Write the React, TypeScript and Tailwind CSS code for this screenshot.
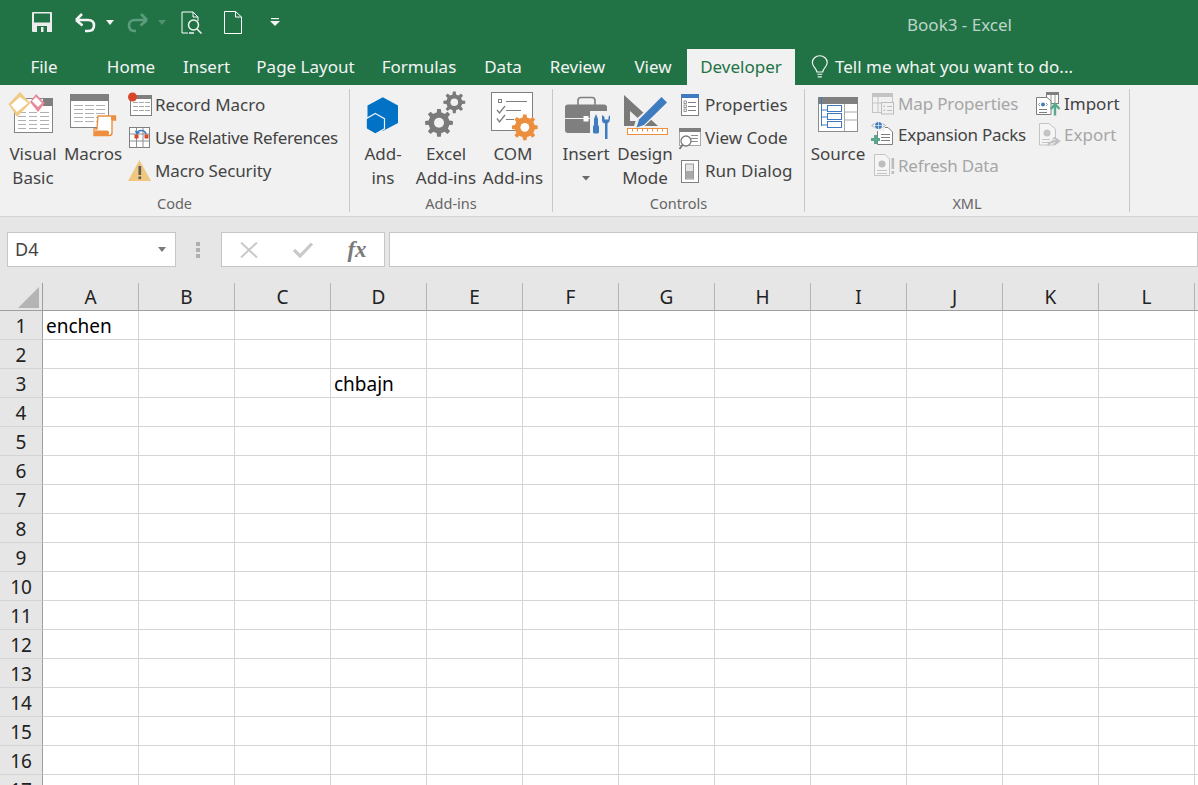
import type { ReactNode } from "react";

const columns = ["A", "B", "C", "D", "E", "F", "G", "H", "I", "J", "K", "L", ""];
const rowNumbers = Array.from({ length: 17 }, (_, i) => i + 1);
const cellText: Record<string, string> = { A1: "enchen", D3: "chbajn" };

const tabs = [
  { name: "File", width: "w-[92px] pr-1" },
  { name: "Home", width: "w-[78px]" },
  { name: "Insert", width: "w-[73px]" },
  { name: "Page Layout", width: "w-[125px]" },
  { name: "Formulas", width: "w-[102px]" },
  { name: "Data", width: "w-[66px]" },
  { name: "Review", width: "w-[83px]" },
  { name: "View", width: "w-[68px]" },
];

// gear outline as polygon points, used by the add-in icons
function gear(cx: number, cy: number, outer: number, inner: number, teeth: number) {
  const pts: string[] = [];
  const step = (Math.PI * 2) / teeth;
  for (let i = 0; i < teeth; i++) {
    const a = i * step - Math.PI / 2;
    const corners: [number, number][] = [
      [inner, a - step * 0.5],
      [inner, a - step * 0.28],
      [outer, a - step * 0.17],
      [outer, a + step * 0.17],
      [inner, a + step * 0.28],
    ];
    corners.forEach(([r, t]) => {
      pts.push(`${(cx + r * Math.cos(t)).toFixed(2)},${(cy + r * Math.sin(t)).toFixed(2)}`);
    });
  }
  return pts.join(" ");
}

function Icon({ box, children }: { box: [number, number, number, number]; children: ReactNode }) {
  return (
    <svg viewBox={box.join(" ")} width={box[2]} height={box[3]} className="block shrink-0">
      {children}
    </svg>
  );
}

function HLines({ x, w, ys, color = "#a8a8a8" }: { x: number; w: number; ys: number[]; color?: string }) {
  return (
    <>
      {ys.map((y) => (
        <rect key={y} x={x} y={y} width={w} height={1} fill={color} />
      ))}
    </>
  );
}

const VisualBasicIcon = () => (
  <Icon box={[8, 89, 50, 52]}>
    <rect x="14.5" y="98.5" width="38" height="34" fill="#fff" stroke="#848484" />
    <rect x="43" y="98" width="10" height="8" fill="#7f7f7f" />
    {[112, 116, 120, 124, 128].map((y) => (
      <g key={y} fill="#b0b0b0">
        <rect x="18" y={y} width="8" height="1" />
        <rect x="29" y={y} width="8" height="1" />
        <rect x="40" y={y} width="9" height="1" />
      </g>
    ))}
    <path d="M20 92 L30.5 103 L17 117 L8.5 104 Z" fill="#f0cb85" />
    <path d="M20 97 L28 103 L17 112 L11 105 Z" fill="#fff" />
    <path d="M36 94 L44.7 103 L38 112 L30 102 Z" fill="#e98a9b" />
    <path d="M36 97 L42 103 L38 107 L32 101 Z" fill="#fff" />
  </Icon>
);

const MacrosIcon = () => (
  <Icon box={[68, 89, 50, 52]}>
    <rect x="70.5" y="94.5" width="38" height="33" fill="#fff" stroke="#848484" />
    <rect x="70" y="94" width="39" height="7" fill="#7f7f7f" />
    {[105, 109, 113, 117, 121].map((y) => (
      <g key={y} fill="#b0b0b0">
        <rect x="74" y={y} width="9" height="1" />
        <rect x="85" y={y} width="9" height="1" />
        <rect x="96" y={y} width="9" height="1" />
      </g>
    ))}
    <path d="M98 116 H115.5 V120 H112 V133 Q112 135.5 109 135.5 H94 L94 129 H97 Z" fill="#fff" stroke="#ed8f3f" strokeWidth="1.4" />
    <rect x="94" y="130.5" width="15" height="5" rx="2" fill="#ed8f3f" />
    <rect x="111" y="116" width="5" height="4" fill="#ed8f3f" />
  </Icon>
);

const RecordIcon = () => (
  <Icon box={[127, 89, 27, 33]}>
    <rect x="130.5" y="95.5" width="21" height="20" fill="#fff" stroke="#7f7f7f" />
    <rect x="130" y="95" width="22" height="4" fill="#7f7f7f" />
    {[102, 106, 110].map((y) => (
      <g key={y} fill="#a8a8a8">
        <rect x="133" y={y} width="5" height="1" />
        <rect x="139" y={y} width="5" height="1" />
        <rect x="145" y={y} width="5" height="1" />
      </g>
    ))}
    <circle cx="132.5" cy="97" r="4.5" fill="#d9472b" />
  </Icon>
);

const RelativeIcon = () => (
  <Icon box={[127, 122, 27, 33]}>
    <rect x="129.5" y="127.5" width="20" height="20" fill="#fff" stroke="#7f7f7f" />
    <path d="M136.5 127.5 V147.5 M143 127.5 V147.5 M129.5 134 H149.5 M129.5 141 H149.5" stroke="#8f8f8f" fill="none" />
    <rect x="134.5" y="134.5" width="4" height="4" fill="#d9472b" />
    <rect x="144.5" y="134.5" width="4" height="4" fill="#d9472b" />
    <path d="M146 134 Q145 130.5 141 130.5 Q138 130.5 137 133" stroke="#3f7cbf" strokeWidth="1.6" fill="none" />
    <path d="M134.5 130.5 L137 135 L140 132 Z" fill="#3f7cbf" />
  </Icon>
);

const SecurityIcon = () => (
  <Icon box={[127, 155, 27, 33]}>
    <path d="M139.5 160 L151 181 H128 Z" fill="#f0c77f" />
    <rect x="138.5" y="166" width="2.6" height="9" fill="#5a5a5a" />
    <rect x="138.5" y="176.5" width="2.6" height="2.6" fill="#5a5a5a" />
  </Icon>
);

const AddInsIcon = () => (
  <Icon box={[364, 89, 38, 52]}>
    <path d="M382.8 97.2 L398 105.5 V123 L382.8 131 L367.5 123 V105.5 Z" fill="#0272c6" />
    <path d="M375.3 113.5 L384.5 118.7 V128.8 L375.3 134 L366.2 128.8 V118.7 Z" fill="#0272c6" stroke="#f1f1f1" strokeWidth="1.2" />
  </Icon>
);

const ExcelAddInsIcon = () => (
  <Icon box={[424, 89, 44, 52]}>
    <polygon points={gear(439, 122.8, 14, 10.5, 8)} fill="#7a7a7a" />
    <circle cx="439" cy="122.8" r="5" fill="#f1f1f1" />
    <polygon points={gear(454.3, 102.3, 11, 8, 8)} fill="#7a7a7a" />
    <circle cx="454.3" cy="102.3" r="3.8" fill="#f1f1f1" />
  </Icon>
);

const ComIcon = () => (
  <Icon box={[488, 89, 50, 52]}>
    <rect x="491.5" y="92.5" width="41" height="38" fill="#fff" stroke="#7f7f7f" />
    <rect x="498.5" y="99.5" width="3" height="3" fill="#fff" stroke="#7f7f7f" />
    <rect x="506" y="101" width="21" height="1" fill="#7f7f7f" />
    <rect x="506" y="110" width="15" height="1" fill="#7f7f7f" />
    <rect x="506" y="119" width="8" height="1" fill="#7f7f7f" />
    <path d="M497 110 L499.5 113 L505 106 M497 118.5 L499.5 122 L505 115" stroke="#7f7f7f" strokeWidth="1.3" fill="none" />
    <polygon points={gear(524.8, 127.3, 13, 10, 8)} fill="#eb8f3f" />
    <circle cx="524.8" cy="127.3" r="4.4" fill="#fff" />
  </Icon>
);

const InsertIcon = () => (
  <Icon box={[562, 89, 48, 52]}>
    <path d="M578 105 V100.5 Q578 97.5 581 97.5 H592 Q595 97.5 595 100.5 V105" fill="none" stroke="#7f7f7f" strokeWidth="1.6" />
    <rect x="565" y="104.5" width="42" height="28.5" rx="3" fill="#7f7f7f" />
    <rect x="565" y="118" width="42" height="1" fill="#f1f1f1" />
    <rect x="583.5" y="116" width="5" height="5.5" fill="#fff" />
    <path d="M590 111 H612 V139 H590 Z" fill="#f1f1f1" />
    <path d="M596 114 L598 119 V125 H594 V119 Z" fill="#3f7cbf" />
    <rect x="593" y="125" width="6" height="8.5" rx="1.5" fill="#3f7cbf" />
    <path d="M602 115 V120 Q602 123 605 123.5 V139 H607.5 V123.5 Q610 122 610 118 V115 L608.5 117 V119.5 H604.5 V117 Z" fill="#3f7cbf" />
  </Icon>
);

const DesignIcon = () => (
  <Icon box={[622, 89, 46, 52]}>
    <path fillRule="evenodd" d="M624 95 L658 126 H624 Z M630 111 V121 H641 Z" fill="#7a7a7a" />
    <path d="M660 99 L666 104 L643 125.5 L635 128 L637.5 120 Z" fill="#f1f1f1" stroke="#f1f1f1" strokeWidth="3" />
    <path d="M661.5 97 L667 102.5 L644 125 L636.5 127.5 L639 119.5 Z" fill="#3f7cbf" />
    <rect x="627.5" y="128.5" width="40" height="6" fill="#fff" stroke="#ed8f3f" />
    {[632, 637, 642, 647, 652, 657, 662].map((x) => (
      <rect key={x} x={x} y="129" width="1" height="2.5" fill="#ed8f3f" />
    ))}
  </Icon>
);

const PropertiesIcon = () => (
  <Icon box={[678, 89, 25, 33]}>
    <rect x="681.5" y="94.5" width="17" height="21" fill="#fff" stroke="#7f7f7f" />
    <rect x="681" y="94" width="18" height="4" fill="#3f7cbf" />
    {[102, 106, 110].map((y) => (
      <g key={y}>
        <rect x="684" y={y - 1} width="2.5" height="2.5" fill="none" stroke="#7f7f7f" strokeWidth="0.8" />
        <rect x="688" y={y} width="8" height="1" fill="#7f7f7f" />
      </g>
    ))}
  </Icon>
);

const ViewCodeIcon = () => (
  <Icon box={[678, 122, 25, 33]}>
    <rect x="679.5" y="128.5" width="21" height="17" fill="#fff" stroke="#a8a8a8" />
    <rect x="679" y="128" width="22" height="4" fill="#7f7f7f" />
    <HLines x={691} w={7} ys={[135, 138, 141]} color="#8f8f8f" />
    <circle cx="686" cy="141" r="5" fill="#fff" stroke="#7a7a7a" strokeWidth="1.3" />
    <path d="M682.5 145 L679.5 149" stroke="#7a7a7a" strokeWidth="1.8" />
  </Icon>
);

const RunDialogIcon = () => (
  <Icon box={[678, 155, 25, 33]}>
    <rect x="681.5" y="160.5" width="17" height="22" fill="#fff" stroke="#7f7f7f" />
    <rect x="685.5" y="164" width="8" height="15" fill="#e4e4e4" stroke="#9a9a9a" />
    <rect x="686" y="171" width="7" height="7.5" fill="#a8a8a8" />
  </Icon>
);

const SourceIcon = () => (
  <Icon box={[816, 89, 44, 52]}>
    <rect x="818.5" y="97.5" width="39" height="34" fill="#fff" stroke="#8c8c8c" />
    <rect x="818" y="97" width="40" height="7" fill="#7f7f7f" />
    <path d="M844.5 104 V131 M844.5 112 H858 M844.5 120 H858" stroke="#a8a8a8" fill="none" />
    <path d="M821.5 97 V126 M821.5 110 H827 M821.5 117 H827 M821.5 125 H827" stroke="#3f7cbf" fill="none" />
    <rect x="827.5" y="105.5" width="14" height="6" fill="#fff" stroke="#3f7cbf" />
    <rect x="827.5" y="113.5" width="14" height="6" fill="#fff" stroke="#3f7cbf" />
    <rect x="827.5" y="121.5" width="14" height="6" fill="#fff" stroke="#3f7cbf" />
  </Icon>
);

const MapPropertiesIcon = () => (
  <Icon box={[871, 89, 25, 31]}>
    <rect x="872.5" y="93.5" width="20" height="19" fill="#f1f1f1" stroke="#c4c4c4" />
    <rect x="872" y="93" width="21" height="4" fill="#c4c4c4" />
    <path d="M878 97 V113 M872.5 103 H893" stroke="#c4c4c4" />
    <rect x="881.5" y="102.5" width="12" height="11.5" fill="#f1f1f1" stroke="#bdbdbd" />
    <HLines x={887} w={5} ys={[106, 110]} color="#bdbdbd" />
    <rect x="883.5" y="105.5" width="1.5" height="1.5" fill="#bdbdbd" />
    <rect x="883.5" y="109.5" width="1.5" height="1.5" fill="#bdbdbd" />
  </Icon>
);

const ExpansionIcon = () => (
  <Icon box={[871, 120, 25, 31]}>
    <path d="M877.5 127.5 H888 L892.5 132 V144.5 H877.5 Z" fill="#fff" stroke="#7f7f7f" />
    <HLines x={881} w={9} ys={[134, 137, 140]} color="#7f7f7f" />
    <rect x="873" y="121" width="12" height="10" fill="#f1f1f1" />
    <circle cx="878.5" cy="125.5" r="3.5" fill="#3f7cbf" />
    <path d="M875 125.5 H882 M878.5 122 V129" stroke="#fff" strokeWidth="0.6" />
    <path d="M872 125.5 L874 123.5 M872 125.5 L874 127.5 M885 125.5 L883 123.5 M885 125.5 L883 127.5" stroke="#7f7f7f" strokeWidth="0.8" />
    <rect x="871" y="138" width="9" height="3" fill="#57a88c" />
    <rect x="874" y="135" width="3" height="9" fill="#57a88c" />
  </Icon>
);

const RefreshIcon = () => (
  <Icon box={[871, 151, 25, 31]}>
    <path d="M874.5 154.5 H885 L889.5 159 V175.5 H874.5 Z" fill="#f5f5f5" stroke="#c4c4c4" />
    <circle cx="882" cy="164" r="3.5" fill="#bdbdbd" />
    <HLines x={877} w={10} ys={[170, 173]} color="#c4c4c4" />
    <rect x="891.5" y="158" width="2.6" height="11" fill="#bdbdbd" />
    <rect x="891.5" y="171" width="2.6" height="3" fill="#bdbdbd" />
  </Icon>
);

const ImportIcon = () => (
  <Icon box={[1035, 89, 27, 31]}>
    <rect x="1046.5" y="92.5" width="12" height="11" fill="#fff" stroke="#7f7f7f" />
    <rect x="1046" y="92" width="13" height="3" fill="#7f7f7f" />
    <path d="M1051 95 V104 M1055 95 V104" stroke="#9a9a9a" />
    <path d="M1036.5 97.5 H1047 L1051 101 V114.5 H1036.5 Z" fill="#fff" stroke="#7f7f7f" />
    <circle cx="1043" cy="104.5" r="2" fill="#3f7cbf" />
    <path d="M1038.5 104.5 L1040 103 M1038.5 104.5 L1040 106 M1047.5 104.5 L1046 103 M1047.5 104.5 L1046 106" stroke="#7f7f7f" strokeWidth="0.8" />
    <HLines x={1039} w={8} ys={[109, 112]} color="#7f7f7f" />
    <path d="M1055 115.5 V106 M1051 109 L1055 104 L1059.5 109" stroke="#57a88c" strokeWidth="2.4" fill="none" />
  </Icon>
);

const ExportIcon = () => (
  <Icon box={[1035, 120, 27, 31]}>
    <path d="M1039.5 123.5 H1049 L1055.5 129 V138 H1053 V145 H1039.5 Z" fill="#f5f5f5" stroke="#c4c4c4" />
    <circle cx="1047" cy="133" r="3.5" fill="#c4c4c4" />
    <HLines x={1042} w={8} ys={[139, 142]} color="#c4c4c4" />
    <path d="M1048 145 Q1050 141 1057 141 M1054 137.5 L1059 141 L1054 145" stroke="#bdbdbd" strokeWidth="2" fill="none" />
  </Icon>
);

function BigButton({
  width,
  icon,
  lines,
  caret,
}: {
  width: string;
  icon: ReactNode;
  lines: string[];
  caret?: boolean;
}) {
  return (
    <div className={`flex flex-col items-center ${width}`}>
      <div className="h-[52px] pb-px">{icon}</div>
      <div className="pt-px">
        {lines.map((line) => (
          <div key={line} className="h-6 whitespace-nowrap text-center leading-6">
            {line}
          </div>
        ))}
      </div>
      {caret && (
        <div className="flex h-6 items-center">
          <svg width="8" height="5" viewBox="0 0 8 5">
            <path d="M0 0 H8 L4 4.5 Z" fill="#6a6a6a" />
          </svg>
        </div>
      )}
    </div>
  );
}

function SmallButton({
  icon,
  label,
  height,
  iconWidth,
  disabled,
  tracking,
}: {
  icon: ReactNode;
  label: string;
  height: string;
  iconWidth: string;
  disabled?: boolean;
  tracking?: string;
}) {
  return (
    <div className={`flex items-center whitespace-nowrap ${height} ${disabled ? "text-[#a6a6a6]" : ""}`}>
      <div className={`shrink-0 ${iconWidth}`}>{icon}</div>
      <span className={`pb-[2px] ${tracking ?? ""}`}>{label}</span>
    </div>
  );
}

function RibbonGroup({ width, label, children }: { width: string; label: string; children: ReactNode }) {
  return (
    <div className={`flex shrink-0 ${width}`}>
      <div className="flex min-w-0 flex-1 flex-col">
        <div className="flex h-[104px]">{children}</div>
        <div className="flex h-6 items-center justify-center text-[14.5px] text-[#666]">{label}</div>
      </div>
      <div className="h-[123px] w-px shrink-0 bg-[#c8c8c8]" />
    </div>
  );
}

function TitleBar() {
  return (
    <div className="flex h-[49px] items-center bg-[#217346] pb-[5px] pl-[32px] pr-[186px]">
      <svg width="20" height="20" viewBox="0 0 20 20">
        <path d="M1 0 H19 Q20 0 20 1 V20 H1 Q0 20 0 19 V1 Q0 0 1 0 Z" fill="#ececec" />
        <rect x="2" y="1.5" width="16" height="9" fill="#217346" />
        <rect x="5" y="14" width="10" height="6" fill="#217346" />
        <rect x="9" y="15" width="2.5" height="5" fill="#ececec" />
      </svg>
      <svg width="24" height="22" viewBox="0 0 24 22" className="ml-[21px]">
        <path d="M3 9 L9 3 M3 9 L9.5 14.5 M3 9 H15 Q21 9 21 14.5 Q21 20 15 20 H12" fill="none" stroke="#f4f4f4" strokeWidth="2.6" />
      </svg>
      <svg width="8" height="5" viewBox="0 0 8 5" className="ml-[9px]">
        <path d="M0 0 H8 L4 5 Z" fill="#f4f4f4" />
      </svg>
      <svg width="24" height="22" viewBox="0 0 24 22" className="ml-[12px]">
        <path d="M21 9 L15 3 M21 9 L14.5 14.5 M21 9 H9 Q3 9 3 14.5 Q3 20 9 20 H10" fill="none" stroke="#5b9c7c" strokeWidth="2.6" />
      </svg>
      <svg width="8" height="5" viewBox="0 0 8 5" className="ml-[8px]">
        <path d="M0 0 H8 L4 5 Z" fill="#4f9271" />
      </svg>
      <svg width="23" height="23" viewBox="0 0 23 23" className="ml-[15px]">
        <path d="M7 22 H1 V1 H12 L17 6 V10 M12 1 V6 H17" fill="none" stroke="#fff" strokeWidth="1" />
        <circle cx="12.5" cy="14" r="5" fill="none" stroke="#f4f4f4" strokeWidth="1.5" />
        <path d="M16 18 L20.5 22.5 M8 22 H13" stroke="#f4f4f4" strokeWidth="1.5" />
      </svg>
      <svg width="18" height="23" viewBox="0 0 18 23" className="ml-[20px]">
        <path d="M.5 .5 H11.5 L17.5 6 V22.5 H.5 Z M11.5 .5 V6 H17.5" fill="none" stroke="#fff" />
      </svg>
      <svg width="10" height="8" viewBox="0 0 10 8" className="ml-[28px]">
        <rect x="1" y="0" width="8" height="1.2" fill="#f4f4f4" />
        <path d="M0 3 H10 L5 8 Z" fill="#f4f4f4" />
      </svg>
      <div className="ml-auto pt-[5px] text-[17px] text-[#bdd5c8]">Book3 - Excel</div>
    </div>
  );
}

function TabRow() {
  return (
    <div className="flex h-9 items-stretch bg-[#217346] text-[17px] text-[#f4f4f4]">
      {tabs.map((tab) => (
        <div key={tab.name} className={`flex shrink-0 items-center justify-center whitespace-nowrap ${tab.width}`}>
          {tab.name}
        </div>
      ))}
      <div className="flex w-[108px] shrink-0 items-center justify-center bg-[#f1f1f1] text-[#217346]">Developer</div>
      <div className="ml-[16px] flex items-center gap-[6px] whitespace-nowrap">
        <svg width="18" height="25" viewBox="0 0 20 27">
          <path d="M6.5 18.5 C6.5 14.5 1.5 13 1.5 8 A8.2 7.5 0 0 1 18 8 C18 13 13 14.5 13 18.5 Z" fill="none" stroke="#f4f4f4" strokeWidth="1.3" />
          <path d="M7 21 H12.5 M7.5 24 H12" stroke="#f4f4f4" strokeWidth="1.3" />
        </svg>
        <span>Tell me what you want to do...</span>
      </div>
    </div>
  );
}

function Ribbon() {
  return (
    <div className="flex h-[132px] border-b border-[#d4d4d4] bg-[#f1f1f1] pt-1 text-[17px] text-[#444]">
      <RibbonGroup width="w-[350px]" label="Code">
        <div className="w-[3px] shrink-0" />
        <BigButton width="w-[60px]" icon={<VisualBasicIcon />} lines={["Visual", "Basic"]} />
        <BigButton width="w-[60px]" icon={<MacrosIcon />} lines={["Macros"]} />
        <div className="ml-[4px] flex flex-col">
          <SmallButton height="h-[33px]" iconWidth="w-[28px]" icon={<RecordIcon />} label="Record Macro" />
          <SmallButton height="h-[33px]" iconWidth="w-[28px]" icon={<RelativeIcon />} label="Use Relative References" tracking="tracking-[-0.32px]" />
          <SmallButton height="h-[33px]" iconWidth="w-[28px]" icon={<SecurityIcon />} label="Macro Security" tracking="tracking-[-0.15px]" />
        </div>
      </RibbonGroup>
      <RibbonGroup width="w-[203px]" label="Add-ins">
        <BigButton width="w-[66px]" icon={<AddInsIcon />} lines={["Add-", "ins"]} />
        <BigButton width="w-[60px]" icon={<ExcelAddInsIcon />} lines={["Excel", "Add-ins"]} />
        <BigButton width="w-[74px]" icon={<ComIcon />} lines={["COM", "Add-ins"]} />
      </RibbonGroup>
      <RibbonGroup width="w-[252px]" label="Controls">
        <BigButton width="w-[66px]" icon={<InsertIcon />} lines={["Insert"]} caret />
        <BigButton width="w-[52px]" icon={<DesignIcon />} lines={["Design", "Mode"]} />
        <div className="ml-[7px] flex flex-col">
          <SmallButton height="h-[33px]" iconWidth="w-[27px]" icon={<PropertiesIcon />} label="Properties" />
          <SmallButton height="h-[33px]" iconWidth="w-[27px]" icon={<ViewCodeIcon />} label="View Code" />
          <SmallButton height="h-[33px]" iconWidth="w-[27px]" icon={<RunDialogIcon />} label="Run Dialog" />
        </div>
      </RibbonGroup>
      <RibbonGroup width="w-[325px]" label="XML">
        <BigButton width="w-[66px]" icon={<SourceIcon />} lines={["Source"]} />
        <div className="flex w-[164px] flex-col">
          <SmallButton height="h-[31px]" iconWidth="w-[27px]" icon={<MapPropertiesIcon />} label="Map Properties" disabled tracking="tracking-[-0.15px]" />
          <SmallButton height="h-[31px]" iconWidth="w-[27px]" icon={<ExpansionIcon />} label="Expansion Packs" tracking="tracking-[-0.27px]" />
          <SmallButton height="h-[31px]" iconWidth="w-[27px]" icon={<RefreshIcon />} label="Refresh Data" disabled tracking="tracking-[-0.2px]" />
        </div>
        <div className="flex flex-col">
          <SmallButton height="h-[31px]" iconWidth="w-[29px]" icon={<ImportIcon />} label="Import" />
          <SmallButton height="h-[31px]" iconWidth="w-[29px]" icon={<ExportIcon />} label="Export" disabled />
        </div>
      </RibbonGroup>
    </div>
  );
}

function FormulaBar() {
  return (
    <div className="flex h-[66px] items-start bg-[#e6e6e6] pl-[7px] pt-[15px]">
      <div className="flex h-[35px] w-[169px] shrink-0 items-center justify-between border border-[#c6c6c6] bg-white pl-[7px] pr-[9px] text-[18px] text-[#444]">
        <span>D4</span>
        <svg width="8" height="5" viewBox="0 0 8 5">
          <path d="M0 0 H8 L4 5 Z" fill="#7a7a7a" />
        </svg>
      </div>
      <div className="flex h-[35px] w-[45px] shrink-0 flex-col items-center justify-center gap-[2px] pr-[2px]">
        <div className="h-[4px] w-[4px] bg-[#b0b0b0]" />
        <div className="h-[4px] w-[4px] bg-[#b0b0b0]" />
        <div className="h-[4px] w-[4px] bg-[#b0b0b0]" />
      </div>
      <div className="flex h-[35px] w-[164px] shrink-0 items-center border border-[#c6c6c6] bg-white">
        <div className="flex w-[54px] justify-center">
          <svg width="18" height="16" viewBox="0 0 18 16">
            <path d="M1 .5 L17 15.5 M17 .5 L1 15.5" stroke="#c9c9c9" strokeWidth="2" />
          </svg>
        </div>
        <div className="flex w-[54px] justify-center">
          <svg width="20" height="16" viewBox="0 0 20 16">
            <path d="M1 8 L7 14 L19 1.5" stroke="#c9c9c9" strokeWidth="3.2" fill="none" />
          </svg>
        </div>
        <div className="flex w-[54px] justify-center font-['Liberation_Serif',serif] text-[23px] font-bold italic leading-none text-[#7a7a7a]">
          fx
        </div>
      </div>
      <div className="ml-[4px] h-[35px] flex-1 border border-[#c6c6c6] bg-white" />
    </div>
  );
}

function Sheet() {
  return (
    <div className="grid grid-cols-[43px_repeat(13,96px)] bg-white text-[19px] text-black">
      <div className="flex h-7 items-end justify-end border-b border-r border-[#9f9f9f] bg-[#e6e6e6] pb-[2px] pr-[3px]">
        <svg width="21" height="21" viewBox="0 0 21 21">
          <path d="M21 0 V21 H0 Z" fill="#b4b4b4" />
        </svg>
      </div>
      {columns.map((col) => (
        <div
          key={col || "next"}
          className="flex h-7 items-center justify-center border-b border-r border-b-[#9f9f9f] border-r-[#b4b4b4] bg-[#e6e6e6] pt-[2px] text-[#222]"
        >
          {col}
        </div>
      ))}
      {rowNumbers.map((row) => (
        <div key={row} className="contents">
          <div className="flex h-[29px] items-center justify-center border-b border-r border-b-[#d4d4d4] border-r-[#9f9f9f] bg-[#e6e6e6] pt-[2px] text-[#222]">
            {row}
          </div>
          {columns.map((col) => (
            <div
              key={col || "next"}
              className="flex h-[29px] items-center whitespace-nowrap border-b border-r border-[#d4d4d4] pl-[3px] pt-[2px]"
            >
              {cellText[`${col}${row}`]}
            </div>
          ))}
        </div>
      ))}
    </div>
  );
}

export default function App() {
  return (
    <div className="h-[785px] w-[1198px] overflow-hidden bg-white font-['Noto_Sans',sans-serif]">
      <TitleBar />
      <TabRow />
      <Ribbon />
      <FormulaBar />
      <Sheet />
    </div>
  );
}
